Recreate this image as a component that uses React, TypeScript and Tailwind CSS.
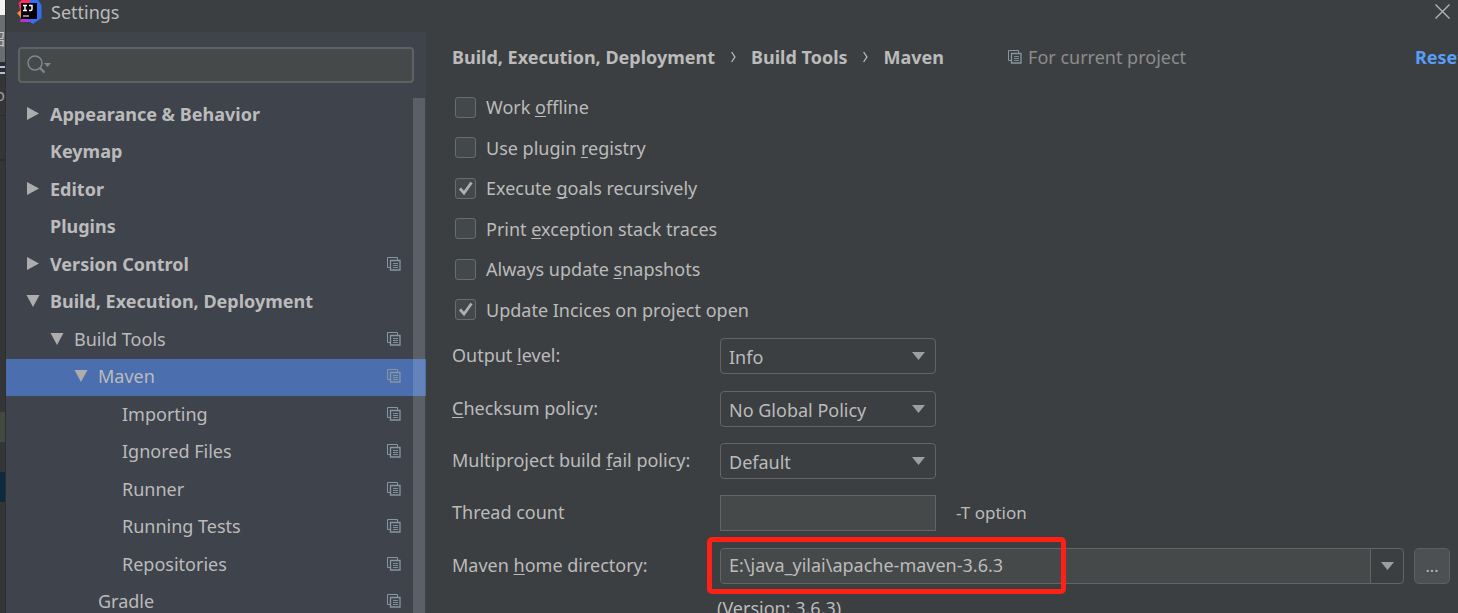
import { useState, type ReactNode } from "react";

type Item = {
  label: string;
  indent: string;
  arrow?: "right" | "down";
  bold?: boolean;
  project?: boolean;
  selected?: boolean;
};

const items: Item[] = [
  { label: "Appearance & Behavior", indent: "pl-5", arrow: "right", bold: true },
  { label: "Keymap", indent: "pl-5", bold: true },
  { label: "Editor", indent: "pl-5", arrow: "right", bold: true },
  { label: "Plugins", indent: "pl-5", bold: true },
  { label: "Version Control", indent: "pl-5", arrow: "right", bold: true, project: true },
  { label: "Build, Execution, Deployment", indent: "pl-5", arrow: "down", bold: true },
  { label: "Build Tools", indent: "pl-11", arrow: "down", project: true },
  { label: "Maven", indent: "pl-[68px]", arrow: "down", project: true, selected: true },
  { label: "Importing", indent: "pl-[92px]", project: true },
  { label: "Ignored Files", indent: "pl-[92px]", project: true },
  { label: "Runner", indent: "pl-[92px]", project: true },
  { label: "Running Tests", indent: "pl-[92px]", project: true },
  { label: "Repositories", indent: "pl-[92px]", project: true },
  { label: "Gradle", indent: "pl-[68px]", project: true },
];

function ProjectIcon() {
  return (
    <svg width="14" height="14" viewBox="0 0 14 14" fill="none" stroke="#8796a1" aria-hidden="true" className="shrink-0">
      <path d="M3 10.500H.5V.5h10V3" />
      <path d="M3.500 3.500h9.500v9.500H3.500z" strokeWidth="1.300" />
      <path d="M6 6.500h5M6 8.500h5M6 10.500h5" strokeWidth=".9" />
    </svg>
  );
}

function TreeArrow({ dir }: { dir?: "right" | "down" }) {
  return (
    <svg width="14" height="14" viewBox="0 0 14 14" fill="#adadad" aria-hidden="true" className="shrink-0">
      {dir === "right" && <path d="M1 0l12 6.500L1 13z" />}
      {dir === "down" && <path d="M.5 1h13L7 13z" />}
    </svg>
  );
}

function DownArrow() {
  return (
    <svg width="13" height="8" viewBox="0 0 13 8" fill="#9c9fa1" aria-hidden="true">
      <path d="M0 0h13L6.500 8z" />
    </svg>
  );
}

function Chevron() {
  return (
    <span className="flex w-9 items-center justify-center">
      <svg width="5" height="12" viewBox="0 0 5 12" fill="none" stroke="#bbbbbb" strokeWidth="1.300" aria-hidden="true">
        <path d="M.6 1l3.300 5-3.300 5" />
      </svg>
    </span>
  );
}

function Logo() {
  return (
    <svg width="26" height="26" viewBox="0 0 26 26" aria-hidden="true" className="shrink-0">
      <path d="M3 12L1.500 5 7 0l9 3-4 12-8 8z" fill="#ff2d62" />
      <path d="M0 15l5-4 4 9-5 0z" fill="#fb8a2c" />
      <path d="M13 2l8 0 3.500 5v13l-8.500 6-6-4z" fill="#2f6ff0" />
      <path d="M3 24l2-7 11 2-1 5-5 0z" fill="#b035d8" />
      <path d="M15 25l-4-4 6-2 4 3z" fill="#3b6df5" />
      <rect x="4" y="5" width="16" height="16" fill="#050308" />
      <path d="M6 7.500h4M8 7.500v5M6 12.500h4M12 7.500h3v3.700c0 1-.5 1.300-1.500 1.300H12" stroke="#fff" strokeWidth="1.400" fill="none" />
      <path d="M6 18h6" stroke="#ddd" strokeWidth="1.200" />
    </svg>
  );
}

function M({ children }: { children: ReactNode }) {
  return <span className="underline decoration-1 underline-offset-2 [text-decoration-skip-ink:none]">{children}</span>;
}

function Check({ id, initial, children }: { id: string; initial?: boolean; children: ReactNode }) {
  const [on, setOn] = useState(!!initial);
  return (
    <div className="flex items-center gap-2.5">
      <span className="relative ml-[3px] flex size-[21px]">
        <input
          id={id}
          type="checkbox"
          checked={on}
          onChange={() => setOn(!on)}
          className="size-[21px] appearance-none rounded-[3px] border border-[#6b6b6b] bg-[#43494a]"
        />
        {on && (
          <svg width="21" height="21" viewBox="0 0 21 21" fill="none" aria-hidden="true" className="pointer-events-none absolute inset-0">
            <path d="M5 10.500l4 4.500 7.500-10.500" stroke="#b0b0b0" strokeWidth="2.800" />
          </svg>
        )}
      </span>
      <label htmlFor={id}>{children}</label>
    </div>
  );
}

function Row({ id, label, children }: { id: string; label: ReactNode; children: ReactNode }) {
  return (
    <div className="flex items-center">
      <label htmlFor={id} className="w-[268px] shrink-0 whitespace-nowrap pb-0.5">{label}</label>
      {children}
    </div>
  );
}

function Select({ id, options }: { id: string; options: string[] }) {
  return (
    <span className="relative flex w-[216px] items-center">
      <select id={id} className="h-9 w-full appearance-none rounded-[4px] border border-[#646464] bg-[#3c3f41] pl-2 pr-8 pt-0.5">
        {options.map((o) => (
          <option key={o}>{o}</option>
        ))}
      </select>
      <span className="pointer-events-none absolute right-[11px]"><DownArrow /></span>
    </span>
  );
}

export default function App() {
  const [home, setHome] = useState("E:\\java_yilai\\apache-maven-3.6.3");
  const [query, setQuery] = useState("");
  const [threads, setThreads] = useState("");
  return (
    <div className="flex h-screen overflow-hidden bg-[#3c3f41] font-['Noto_Sans','Noto_Sans_CJK_SC',sans-serif] text-lg leading-6 text-[#bbbbbb]">
      <div className="flex w-1.5 shrink-0 flex-col overflow-hidden border-r border-[#2d2f31] bg-[#333536]" aria-hidden="true">
        <div className="h-[15px] shrink-0 bg-[#f2f2f2]" />
        <div className="flex h-[47px] shrink-0 items-center justify-end bg-[#6a6e71] text-base text-[#c4c8ca]">绍</div>
        <div className="h-3 shrink-0 border-b-2 border-[#b9bcc9] bg-[#282c3a] pt-1"><div className="h-0.5 bg-[#b9bcc9]" /></div>
        <div className="flex h-[42px] shrink-0 items-center justify-end border-b border-[#292b2c] text-base text-[#a0a0a0]">o</div>
        <div className="h-[45px] shrink-0 border-b-2 border-[#292b2c]" />
        <div className="h-[251px] shrink-0" />
        <div className="h-[30px] shrink-0 bg-[#434b40]" />
        <div className="h-[30px] shrink-0" />
        <div className="h-[30px] shrink-0 bg-[#0d293e]" />
      </div>

      <div className="flex min-w-0 flex-1 flex-col">
        <header className="flex h-8 shrink-0 items-start gap-2 pl-[11px] pr-2">
          <span className="-mt-0.5"><Logo /></span>
          <h1 className="flex-1">Settings</h1>
          <button type="button" aria-label="Close" className="pt-1">
            <svg width="15" height="15" viewBox="0 0 15 15" stroke="#b4b4b4" strokeWidth="1.400" aria-hidden="true">
              <path d="M.5 .5l14 14M14.500 .5l-14 14" />
            </svg>
          </button>
        </header>

        <div className="flex min-h-0 flex-1">
          <aside className="flex w-[420px] shrink-0 flex-col bg-[#3f434c]">
            <div className="mx-3 mt-[15px] flex h-9 shrink-0 items-center rounded-[4px] border-2 border-[#5f6262] bg-[#45494a] pl-[7px]">
              <svg width="25" height="20" viewBox="0 0 25 20" fill="none" aria-hidden="true" className="shrink-0">
                <circle cx="8" cy="8" r="7" stroke="#7e888e" strokeWidth="1.500" />
                <path d="M12.500 12.500l5 5" stroke="#7e888e" strokeWidth="2.400" />
                <path d="M17 8h7l-3.500 4z" fill="#7e888e" />
              </svg>
              <input aria-label="Search settings" value={query} onChange={(e) => setQuery(e.target.value)} className="min-w-0 flex-1 bg-transparent px-1 outline-none" />
            </div>

            <nav className="relative mt-[13px] shrink-0">
              <ul className="grid h-[525px] auto-rows-fr">
                {items.map((it) => (
                  <li key={it.label} className={it.selected ? "flex bg-[#4b6eaf]" : "flex"}>
                    <a href="#" className={`flex flex-1 items-center gap-2.5 pb-0.5 pr-[25px] ${it.indent} ${it.bold ? "font-bold" : ""}`}>
                      <TreeArrow dir={it.arrow} />
                      <span className="flex-1">{it.label}</span>
                      {it.project && <ProjectIcon />}
                    </a>
                  </li>
                ))}
              </ul>
              <div className="absolute bottom-0 right-px top-0.5 w-3 bg-white/15" />
            </nav>
          </aside>

          <main className="flex min-w-0 flex-1 flex-col pl-[26px]">
            <div className="mt-[11px] flex h-7 shrink-0 items-center overflow-hidden whitespace-nowrap">
              <nav aria-label="Breadcrumb" className="flex font-bold">
                <a href="#">Build, Execution, Deployment</a>
                <Chevron />
                <a href="#">Build Tools</a>
                <Chevron />
                <a href="#">Maven</a>
              </nav>
              <span className="ml-16 flex items-center gap-1.5 text-[#8c8c8c]">
                <ProjectIcon />
                For current project
              </span>
              <a href="#" className="ml-auto w-[43px] shrink-0 font-bold text-[#589df6]">Reset</a>
            </div>

            <div className="mt-4 grid h-[243px] shrink-0 auto-rows-fr">
              <Check id="offline">Work <M>o</M>ffline</Check>
              <Check id="registry">Use plugin <M>r</M>egistry</Check>
              <Check id="recursive" initial>Execute <M>g</M>oals recursively</Check>
              <Check id="traces">Print <M>e</M>xception stack traces</Check>
              <Check id="snapshots">Always update <M>s</M>napshots</Check>
              <Check id="indices" initial>Update Incices on project open</Check>
            </div>

            <div className="grid h-[262px] shrink-0 auto-rows-fr">
              <Row id="level" label={<>Output <M>l</M>evel:</>}>
                <Select id="level" options={["Info", "Debug", "Warn", "Error"]} />
              </Row>
              <Row id="checksum" label={<><M>C</M>hecksum policy:</>}>
                <Select id="checksum" options={["No Global Policy", "Fail", "Warn"]} />
              </Row>
              <Row id="fail" label={<>Multiproject build <M>f</M>ail policy:</>}>
                <Select id="fail" options={["Default", "Fail Fast", "Fail At End"]} />
              </Row>
              <Row id="threads" label="Thread count">
                <input id="threads" value={threads} onChange={(e) => setThreads(e.target.value)} className="h-9 w-[216px] border border-[#646464] bg-[#45494a] px-2 outline-none" />
                <span className="ml-5 text-[17px]">-T option</span>
              </Row>
              <Row id="home" label={<>Maven <M>h</M>ome directory:</>}>
                <div className="relative flex min-w-0 flex-1 gap-2.5 pr-2">
                  <div className="flex h-9 min-w-0 flex-1 overflow-hidden rounded-[4px] border border-[#646464]">
                    <input id="home" value={home} onChange={(e) => setHome(e.target.value)} className="min-w-0 flex-1 bg-[#45494a] px-2 pb-0.5 outline-none" />
                    <button type="button" aria-label="Show recent directories" className="flex w-[33px] items-center justify-center border-l border-[#646464]">
                      <DownArrow />
                    </button>
                  </div>
                  <button type="button" aria-label="Browse" className="h-9 w-9 rounded-[5px] border border-[#5e6060] bg-[#4c5052] text-base">...</button>
                  <div className="pointer-events-none absolute -left-[13px] -top-[11px] h-[57px] w-[359px] rounded-[5px] border-5 border-[#ff2116]" />
                </div>
              </Row>
            </div>
            <p className="shrink-0 pl-[265px] pt-1">(Version: 3.6.3)</p>
          </main>
        </div>
      </div>
    </div>
  );
}
